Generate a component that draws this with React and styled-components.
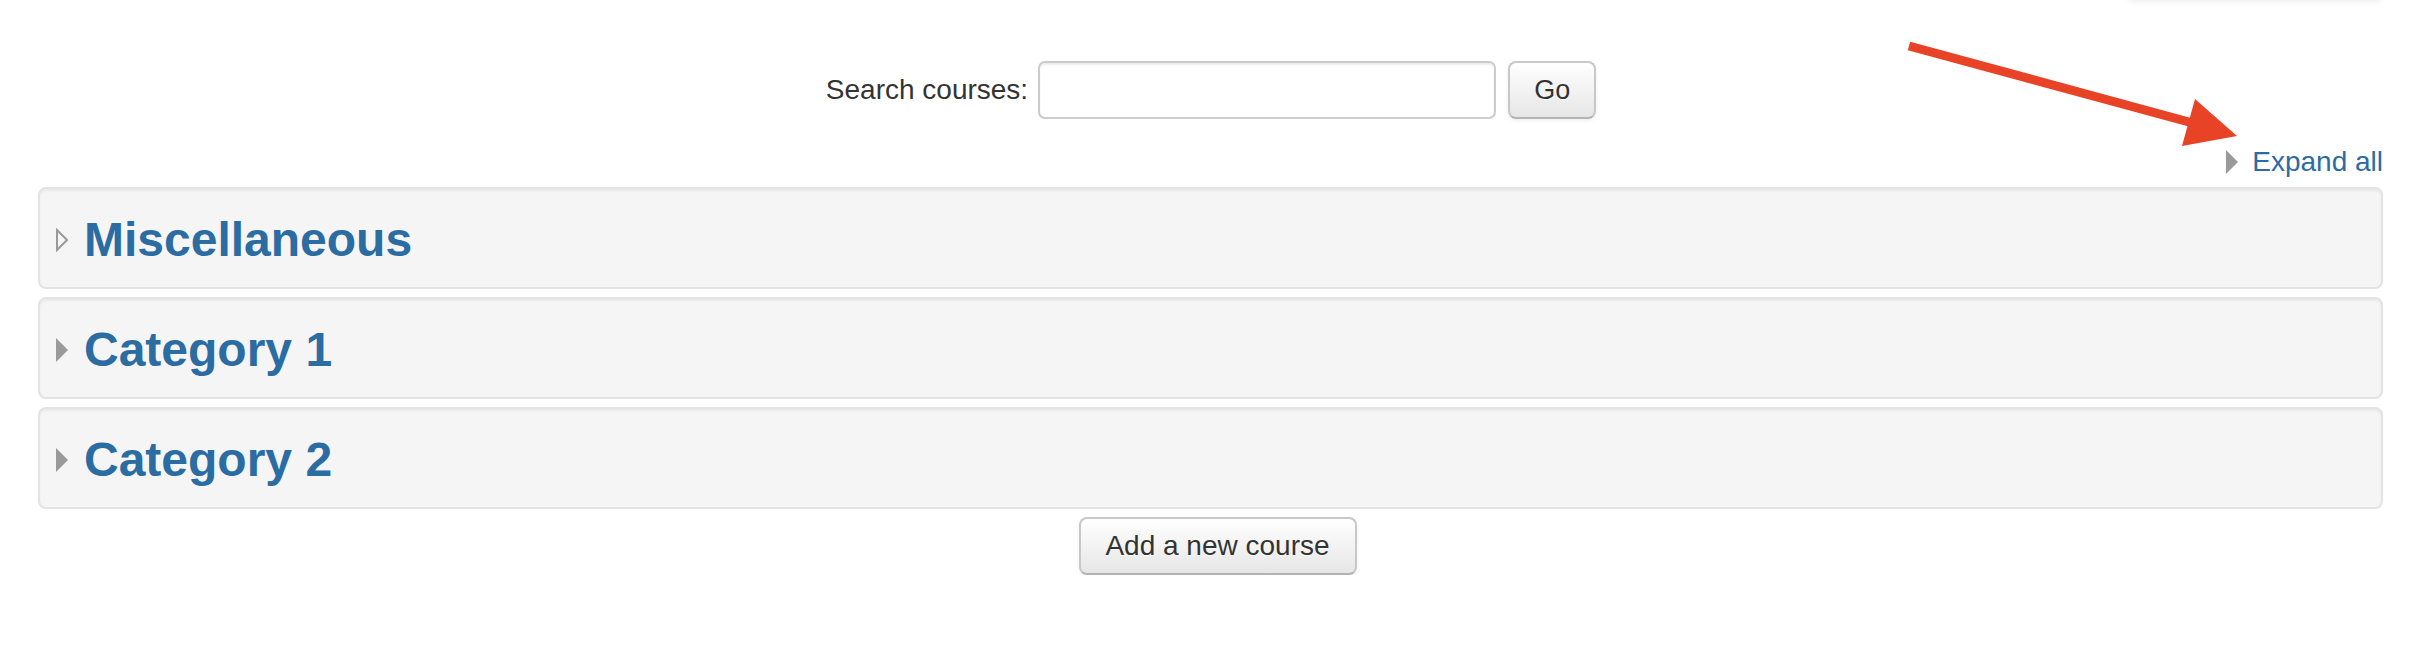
import React from 'react'
import styled, { createGlobalStyle } from 'styled-components'

// page wide defaults
const GlobalStyle = createGlobalStyle`
  html, body {
    margin: 0;
    padding: 0;
    background: #ffffff;
  }
  body {
    font-family: "Liberation Sans", Helvetica, Arial, sans-serif;
    color: #333333;
  }
  * { box-sizing: border-box; }
`

const Page = styled.div`
  position: relative;
  width: 100%;
  padding: 0 31px 0 38px;
`
const TopBar = styled.div`
  display: flex;
  justify-content: flex-end;
  height: 0;
`
const ShadowTab = styled.div`
  width: 256px;
  height: 14px;
  margin-top: -14px;
  background: #fff;
  border-radius: 0 0 8px 8px;
  box-shadow: 0 2px 6px rgba(0, 0, 0, 0.07);
`
const SearchForm = styled.form`
  display: flex;
  justify-content: center;
  align-items: center;
  padding-top: 61px;
  margin-left: 1px;
`
const Label = styled.label`
  font-size: 28px;
  color: #333;
  margin-right: 10px;
`
const Input = styled.input`
  width: 458px;
  height: 58px;
  border: 2px solid #cccccc;
  border-radius: 7px;
  background: #fff;
  box-shadow: inset 0 2px 2px rgba(0, 0, 0, 0.075);
  outline: none;
`
const Button = styled.button`
  height: 58px;
  width: ${(p) => p.width}px;
  margin-left: ${(p) => p.gap || 0}px;
  font-family: inherit;
  font-size: ${(p) => p.size || 28}px;
  color: #333333;
  text-shadow: 0 1px 1px rgba(255, 255, 255, 0.75);
  background: linear-gradient(to bottom, #ffffff, #e6e6e6);
  border: 2px solid #c8c8c8;
  border-bottom-color: #b3b3b3;
  border-radius: 8px;
  box-shadow: inset 0 2px 0 rgba(255, 255, 255, 0.2), 0 2px 4px rgba(0, 0, 0, 0.06);
  padding: 0;
  cursor: pointer;
`
const ExpandRow = styled.div`
  display: flex;
  justify-content: flex-end;
  align-items: center;
  gap: 14px;
  height: 28px;
  margin-top: 29px;
  margin-bottom: 11px;
`
const ExpandLink = styled.a`
  font-size: 28px;
  line-height: 28px;
  color: #2b6ca3;
  text-decoration: none;
`
const Category = styled.div`
  display: flex;
  align-items: center;
  gap: 16px;
  height: 102px;
  margin-bottom: 8px;
  padding: 4px 0 0 16px;
  background: #f5f5f5;
  border: 2px solid #e3e3e3;
  border-radius: 8px;
  box-shadow: inset 0 2px 2px rgba(0, 0, 0, 0.05);
`
const CategoryName = styled.h3`
  margin: 0;
  font-size: 48px;
  font-weight: bold;
  line-height: 1;
  color: #2b6ca3;
`
const Actions = styled.div`
  display: flex;
  justify-content: center;
  padding-left: 14px;
  margin-top: 0;
`
const Overlay = styled.svg`
  position: absolute;
  top: 0;
  left: 0;
  pointer-events: none;
`

const Caret = ({ open }) => (
  <svg width="12" height="24" viewBox="0 0 12 24">
    {open ? (
      <polygon points="1,2 11,12 1,22" fill="none" stroke="#9a9a9a" strokeWidth="2" />
    ) : (
      <polygon points="0,0 12,12 0,24" fill="#9a9a9a" />
    )}
  </svg>
)

const categories = [
  { name: 'Miscellaneous', empty: true },
  { name: 'Category 1' },
  { name: 'Category 2' },
]

export default function App() {
  return (
    <>
      <GlobalStyle />
      <Page>
        <TopBar>
          <ShadowTab />
        </TopBar>
        <SearchForm onSubmit={(e) => e.preventDefault()}>
          <Label htmlFor="coursesearch">Search courses:</Label>
          <Input id="coursesearch" type="text" />
          <Button width={88} gap={12} size={27}>Go</Button>
        </SearchForm>
        <ExpandRow>
          <Caret />
          <ExpandLink href="#">Expand all</ExpandLink>
        </ExpandRow>
        {categories.map((c) => (
          <Category key={c.name}>
            <Caret open={c.empty} />
            <CategoryName>{c.name}</CategoryName>
          </Category>
        ))}
        <Actions>
          <Button width={278} size={28}>Add a new course</Button>
        </Actions>
        {/* red annotation arrow drawn over the page */}
        <Overlay width="2414" height="200" viewBox="0 0 2414 200">
          <line x1="1909" y1="46" x2="2200" y2="125" stroke="#e84227" strokeWidth="9" />
          <polygon points="2195,99 2237,136 2182,146" fill="#e84227" />
        </Overlay>
      </Page>
    </>
  )
}
